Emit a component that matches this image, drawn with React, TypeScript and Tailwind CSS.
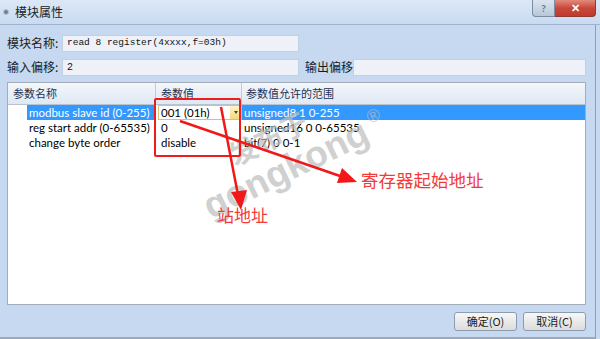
import React from 'react';

const cjk = { fontFamily: '"Noto Sans CJK SC", "Noto Sans", sans-serif' };
const ui = { fontFamily: 'Lato, "Noto Sans", sans-serif' };

const rows = [
  { name: 'modbus slave id (0-255)', value: '001 (01h)', range: 'unsigned8 1 0-255' },
  { name: 'reg start addr (0-65535)', value: '0', range: 'unsigned16 0 0-65535' },
  { name: 'change byte order', value: 'disable', range: 'bit(7) 0 0-1' },
];

function TitleBar() {
  return (
    <div className="relative h-[25px] flex items-center bg-gradient-to-b from-[#dce8f6] to-[#c9dbf1] border-b border-[#9fb4cf]">
      <div className="ml-[3px] w-[6px] h-[6px] rounded-full bg-[#6d7f96] border border-[#b9c6d6]" />
      <span className="ml-[6px] text-[12px] text-[#1b1b1b]" style={cjk}>
        模块属性
      </span>
      <div className="absolute right-[4px] top-0 flex">
        <div className="w-[23px] h-[17px] flex items-center justify-center rounded-bl-[4px] border border-t-0 border-[#7b8ca3] bg-gradient-to-b from-[#dbe5f1] to-[#b7c7da] text-[10px] font-bold text-[#6b7785]" style={ui}>
          ?
        </div>
        <div className="w-[41px] h-[17px] flex items-center justify-center rounded-br-[4px] border border-t-0 border-l-0 border-[#8a3a30] bg-gradient-to-b from-[#e08a7c] via-[#c9473a] to-[#c0392d] text-[11px] font-bold text-white" style={ui}>
          ✕
        </div>
      </div>
    </div>
  );
}

function Field({ w, children }: { w: string; children?: React.ReactNode }) {
  return (
    <div className={`${w} h-[17px] flex items-center px-[4px] bg-[#eef2f8] border border-[#c2d0e2]`}>
      {children}
    </div>
  );
}

export default function App() {
  return (
    <div className="relative w-[600px] h-[339px] overflow-hidden bg-[#c6d9f0] flex flex-col">
      <TitleBar />
      <div className="flex-1 flex flex-col px-[7px] border-r border-[#8d9fb6] mr-[4px] border-b-2 border-b-[#9aa9bc]">
        <div className="mt-[9px] flex items-center">
          <span className="w-[55px] text-[12px] text-[#1b1b1b]" style={cjk}>模块名称:</span>
          <Field w="w-[237px]">
            <span className="text-[9.5px] text-[#111]" style={{ fontFamily: '"Liberation Mono", monospace' }}>
              read 8 register(4xxxx,f=03h)
            </span>
          </Field>
        </div>
        <div className="mt-[6px] flex items-center">
          <span className="w-[55px] text-[12px] text-[#1b1b1b]" style={cjk}>输入偏移:</span>
          <Field w="w-[237px]">
            <span className="text-[10px] text-[#111]" style={{ fontFamily: '"Liberation Mono", monospace' }}>2</span>
          </Field>
          <span className="ml-[6px] w-[48px] text-[12px] text-[#1b1b1b]" style={cjk}>输出偏移</span>
          <Field w="w-[233px]" />
        </div>

        <div className="mt-[6px] w-[579px] h-[223px] bg-white border border-[#a3adb9] flex flex-col">
          <div className="h-[22px] flex bg-gradient-to-b from-[#f4f7fb] to-[#dfe8f4] border-b border-[#b9c3cf] text-[11px] text-[#1e3050]" style={cjk}>
            <div className="w-[148px] pl-[5px] flex items-center border-r border-[#c2cad4]">参数名称</div>
            <div className="w-[86px] pl-[5px] flex items-center border-r border-[#c2cad4]">参数值</div>
            <div className="flex-1 pl-[4px] flex items-center">参数值允许的范围</div>
          </div>
          {rows.map((r, i) => (
            <div key={r.name} className="h-[15px] flex text-[11.5px] leading-[15px] whitespace-nowrap" style={ui}>
              <div className="w-[148px] pl-[19px]">
                <div className={i === 0 ? 'h-full pl-[2px] bg-[#3399ff] text-white' : 'h-full pl-[2px] text-black'}>
                  {r.name}
                </div>
              </div>
              <div className="w-[86px] pl-[2px]">
                {i === 0 ? (
                  <div className="h-full flex items-center bg-white border border-[#d9c07a] pl-[2px] text-black">
                    <span className="flex-1">{r.value}</span>
                    <div className="w-[11px] h-full flex items-center justify-center bg-gradient-to-b from-[#fff3c8] to-[#f5d77a]">
                      <div className="w-0 h-0 border-l-[2.5px] border-r-[2.5px] border-t-[3px] border-l-transparent border-r-transparent border-t-[#444]" />
                    </div>
                  </div>
                ) : (
                  <div className="h-full pl-[3px] text-black">{r.value}</div>
                )}
              </div>
              <div className={i === 0 ? 'flex-1 pl-[2px] bg-[#3399ff] text-white' : 'flex-1 pl-[2px] text-black'}>
                {r.range}
              </div>
            </div>
          ))}
        </div>

        <div className="mt-[7px] flex justify-end gap-[6px] pr-[2px]">
          {['确定(O)', '取消(C)'].map((t) => (
            <div key={t} className="w-[63px] h-[19px] flex items-center justify-center rounded-[3px] border border-[#8e9bad] bg-gradient-to-b from-[#f7f7f7] to-[#dcdcdc] text-[11px] text-[#222]" style={cjk}>
              {t}
            </div>
          ))}
        </div>
      </div>

      {/* watermark */}
      <div
        className="absolute left-[188px] top-[111px] w-[220px] -rotate-[26deg] pointer-events-none select-none text-[#bdbdbd] opacity-70 font-bold leading-none whitespace-nowrap"
        style={{ fontFamily: '"Liberation Sans", sans-serif' }}
      >
        <div className="h-[32px] pl-[45px] text-[28px]" style={cjk}>发布于</div>
        <div className="h-[40px] text-[37px]">
          gongkong<span className="ml-[6px] text-[18px] font-normal align-top">®</span>
        </div>
      </div>

      {/* annotations */}
      <div className="absolute left-[154px] top-[98px] w-[87px] h-[59px] border-2 border-[#ee1c1c] rounded-[2px] pointer-events-none" />
      <svg className="absolute left-0 top-0 pointer-events-none" width="600" height="339">
        <line x1="221" y1="107" x2="238" y2="195" stroke="#f01818" strokeWidth="2.5" />
        <polygon points="241,210 231,192 247,190" fill="#f01818" />
        <line x1="180" y1="121" x2="340" y2="176" stroke="#f01818" strokeWidth="2.5" />
        <polygon points="357,182 337,183 342,168" fill="#f01818" />
      </svg>
      <div className="absolute left-[217px] top-[206px] text-[17px] text-[#f23a3a] leading-none" style={cjk}>站地址</div>
      <div className="absolute left-[361px] top-[171px] text-[17.5px] text-[#f23a3a] leading-none" style={cjk}>寄存器起始地址</div>
    </div>
  );
}
